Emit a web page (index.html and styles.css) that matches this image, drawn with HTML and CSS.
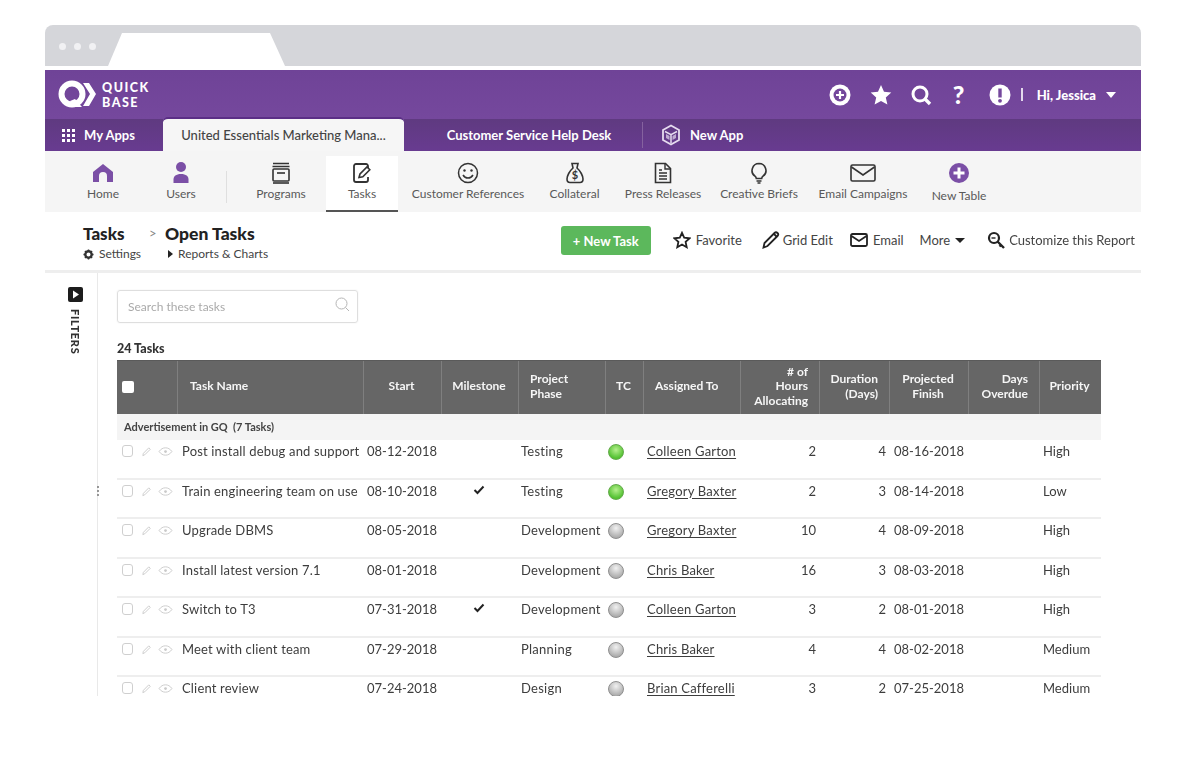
FILE: index.html
```html
<!DOCTYPE html>
<html lang="en">
<head>
<meta charset="utf-8">
<title>Quick Base – Open Tasks</title>
<link rel="stylesheet" href="styles.css">
</head>
<body>
<svg class="defs" width="0" height="0" aria-hidden="true">
  <symbol id="i-pencil" viewBox="0 0 12 12"><path d="M2 10.5 2.6 8 8.5 2l1.6 1.6-6 6Z" fill="none" stroke="currentColor" stroke-width="1"/></symbol>
  <symbol id="i-eye" viewBox="0 0 16 12"><path d="M1 6c2-2.8 4.2-4 7-4s5 1.200 7 4c-2 2.800-4.200 4-7 4S3 8.800 1 6Z" fill="none" stroke="currentColor" stroke-width="1"/><circle cx="8" cy="6" r="1.500" fill="currentColor"/></symbol>
  <symbol id="i-check" viewBox="0 0 12 10"><path d="M1.500 5 4.500 8 10.500 1.500" fill="none" stroke="currentColor" stroke-width="2"/></symbol>
</svg>
<div class="frame">
  <div class="chrome">
    <div class="dots"><i></i><i></i><i></i></div>
    <div class="chrome-tab"></div>
  </div>

  <header class="topbar">
    <div class="logo">
      <svg class="logo-mark" viewBox="0 0 38 30" width="38" height="30"><circle cx="14" cy="14" r="10.500" fill="none" stroke="#fff" stroke-width="6"/><path d="M17 19l7 8h-7l-5-6Z" fill="#fff"/><path d="M25 3h6l7 11-7 12h-6l7-12Z" fill="#fff"/></svg>
      <div class="logo-text"><span>QUICK</span><span>BASE</span></div>
    </div>
    <div class="top-actions">
      <svg class="ta ta-plus" viewBox="0 0 22 22" width="22" height="22"><circle cx="11" cy="11" r="10.500" fill="#fff"/><circle cx="11" cy="11" r="6.500" fill="#74479c"/><path d="M11 7v8M7 11h8" stroke="#fff" stroke-width="2.200"/></svg>
      <svg class="ta ta-star" viewBox="0 0 22 22" width="22" height="22"><path d="M11 1l3 6.800 7.300.7-5.500 4.900 1.600 7.200L11 16.900l-6.400 3.700 1.600-7.200L.7 8.500 8 7.800Z" fill="#fff"/></svg>
      <svg class="ta ta-search" viewBox="0 0 22 22" width="22" height="22"><circle cx="10" cy="10" r="7" fill="none" stroke="#fff" stroke-width="3"/><path d="M14.500 14.500 20 20" stroke="#fff" stroke-width="3.400"/></svg>
      <span class="ta ta-q">?</span>
      <svg class="ta ta-alert" viewBox="0 0 22 22" width="22" height="22"><circle cx="11" cy="11" r="10.500" fill="#fff"/><path d="M11 4.500v9" stroke="#74479c" stroke-width="3.400"/><circle cx="11" cy="16.800" r="1.900" fill="#74479c"/></svg>
      <span class="ta-sep"></span>
      <span class="ta-user">Hi, Jessica</span>
      <span class="caret caret-white"></span>
    </div>
  </header>

  <nav class="tabbar">
    <div class="apps-link">
      <svg viewBox="0 0 13 13" width="13" height="13"><g fill="#fff"><rect width="3" height="3"/><rect x="5" width="3" height="3"/><rect x="10" width="3" height="3"/><rect y="5" width="3" height="3"/><rect x="5" y="5" width="3" height="3"/><rect x="10" y="5" width="3" height="3"/><rect y="10" width="3" height="3"/><rect x="5" y="10" width="3" height="3"/><rect x="10" y="10" width="3" height="3"/></g></svg>
      <span>My Apps</span>
    </div>
    <div class="tab-active">United Essentials Marketing Mana...</div>
    <div class="tab-plain">Customer Service Help Desk</div>
    <div class="tab-new">
      <svg viewBox="0 0 20 22" width="20" height="22"><path d="M10 1.500 18 6v10l-8 4.500L2 16V6Z" fill="none" stroke="#e6dcef" stroke-width="1.800"/><path d="M4 7.500l6 3.200 6-3.200M10 10.700V19" fill="none" stroke="#e6dcef" stroke-width="1.500"/><path d="M5 10l3.500 2v4L5 14ZM15 10l-3.500 2v4l3.500-2Z" fill="#e6dcef" opacity=".7"/></svg>
      <span>New App</span>
    </div>
  </nav>

  <nav class="tablenav">
    <a class="nav-item">
      <svg class="nav-icon" viewBox="0 0 22 22" width="22" height="22"><path d="M11 2 21 10v10h-6v-6a4 4 0 0 0-8 0v6H1V10Z" fill="#7b4fa6"/></svg>
      <span>Home</span>
    </a>
    <a class="nav-item">
      <svg class="nav-icon" viewBox="0 0 22 24" width="22" height="24"><circle cx="11" cy="6" r="5" fill="#7b4fa6"/><path d="M3.500 22v-3.500c0-3.200 2.500-5.500 7.500-5.500s7.500 2.300 7.500 5.500V22Z" fill="#7b4fa6"/></svg>
      <span>Users</span>
    </a>
    <div class="nav-divider"></div>
    <a class="nav-item">
      <svg class="nav-icon" viewBox="0 0 20 22" width="20" height="22"><g fill="none" stroke="#333" stroke-width="1.600"><path d="M2 1.500h16M1.500 4.500h17"/><rect x="2" y="7" width="16" height="12" rx="1"/><path d="M6 11h8"/><path d="M2 21h16"/></g></svg>
      <span>Programs</span>
    </a>
    <a class="nav-item nav-active">
      <svg class="nav-icon" viewBox="0 0 22 22" width="22" height="22"><path d="M17 6V4a2 2 0 0 0-2-2H5a2 2 0 0 0-2 2v14a2 2 0 0 0 2 2h10a2 2 0 0 0 2-2v-3" fill="none" stroke="#333" stroke-width="1.800"/><path d="M8 15.500 9 12l7-7 2.800 2.800-7 7Z" fill="#fff" stroke="#333" stroke-width="1.600"/></svg>
      <span>Tasks</span>
    </a>
    <a class="nav-item">
      <svg class="nav-icon" viewBox="0 0 22 22" width="22" height="22"><circle cx="11" cy="11" r="9.500" fill="none" stroke="#333" stroke-width="1.500"/><circle cx="7.500" cy="8.500" r="1.200" fill="#333"/><circle cx="14.500" cy="8.500" r="1.200" fill="#333"/><path d="M6 13c1.200 2 3 3 5 3s3.800-1 5-3" fill="none" stroke="#333" stroke-width="1.500"/></svg>
      <span>Customer References</span>
    </a>
    <a class="nav-item">
      <svg class="nav-icon" viewBox="0 0 20 22" width="20" height="22"><path d="M7 1.500h6L12 6c3.500 3 6 8 6 11 0 2.500-1.500 3.500-3 3.500H5c-1.500 0-3-1-3-3.500 0-3 2.500-8 6-11Z" fill="none" stroke="#333" stroke-width="1.600"/><text x="10" y="17" class="svg-dollar">$</text></svg>
      <span>Collateral</span>
    </a>
    <a class="nav-item">
      <svg class="nav-icon" viewBox="0 0 18 22" width="18" height="22"><path d="M1.500 1.500h10l5 5v14h-15Z" fill="none" stroke="#333" stroke-width="1.600"/><path d="M11 1.500v5.500h5.500M5 11h8M5 14h8M5 17h8M5 8h3" fill="none" stroke="#333" stroke-width="1.400"/></svg>
      <span>Press Releases</span>
    </a>
    <a class="nav-item">
      <svg class="nav-icon" viewBox="0 0 18 22" width="18" height="22"><path d="M9 1.500a7 7 0 0 0-4 12.700c.8.700 1.200 1.500 1.300 2.300h5.400c.1-.8.500-1.600 1.300-2.300A7 7 0 0 0 9 1.500Z" fill="none" stroke="#333" stroke-width="1.600"/><path d="M6.500 19h5M7.500 21h3" stroke="#333" stroke-width="1.600"/></svg>
      <span>Creative Briefs</span>
    </a>
    <a class="nav-item">
      <svg class="nav-icon" viewBox="0 0 26 18" width="26" height="18"><rect x="1" y="1" width="24" height="16" rx="1.500" fill="none" stroke="#333" stroke-width="1.600"/><path d="M1.500 3 13 11 24.500 3" fill="none" stroke="#333" stroke-width="1.600"/></svg>
      <span>Email Campaigns</span>
    </a>
    <a class="nav-item nav-new">
      <svg class="nav-icon" viewBox="0 0 20 20" width="20" height="20"><circle cx="10" cy="10" r="10" fill="#7b4fa6"/><path d="M10 4.500v11M4.500 10h11" stroke="#fff" stroke-width="3"/></svg>
      <span>New Table</span>
    </a>
  </nav>

  <section class="titlebar">
    <div class="crumbs">
      <div class="crumb">
        <div class="crumb-title">Tasks</div>
        <div class="crumb-sub">
          <svg viewBox="0 0 12 12" width="11" height="11"><circle cx="6" cy="6" r="3.500" fill="none" stroke="#333" stroke-width="2.600"/><path d="M6 .5v2M6 9.500v2M.5 6h2M9.500 6h2M2.100 2.100l1.400 1.400M8.500 8.500l1.400 1.400M2.100 9.900l1.400-1.400M8.500 3.500l1.400-1.400" stroke="#333" stroke-width="1.600"/></svg>
          <span>Settings</span>
        </div>
      </div>
      <div class="crumb-arrow">&gt;</div>
      <div class="crumb">
        <div class="crumb-title crumb-large">Open Tasks</div>
        <div class="crumb-sub crumb-sub-reports">
          <span class="tri"></span>
          <span>Reports &amp; Charts</span>
        </div>
      </div>
    </div>
    <div class="report-actions">
      <button class="btn-new">+ New Task</button>
      <a class="ra ra-fav">
        <svg viewBox="0 0 18 18" width="18" height="18"><path d="M9 1.800l2.200 4.900 5.300.6-3.900 3.600 1.100 5.300L9 13.500l-4.700 2.700 1.100-5.300-3.900-3.600 5.300-.6Z" fill="none" stroke="#222" stroke-width="1.800"/></svg>
        <span>Favorite</span>
      </a>
      <a class="ra ra-grid">
        <svg viewBox="0 0 18 18" width="18" height="18"><path d="M1.500 16.500 2.500 12 12.500 2a2 2 0 0 1 3 3l-10 10Z" fill="none" stroke="#222" stroke-width="1.800"/><path d="M12 3l3 3" stroke="#222" stroke-width="1.800"/></svg>
        <span>Grid Edit</span>
      </a>
      <a class="ra ra-email">
        <svg viewBox="0 0 18 14" width="18" height="14"><rect x="1" y="1" width="16" height="12" rx="1.500" fill="none" stroke="#222" stroke-width="1.800"/><path d="M1.500 3 9 8l7.500-5" fill="none" stroke="#222" stroke-width="1.800"/></svg>
        <span>Email</span>
      </a>
      <a class="ra ra-more"><span>More</span><span class="caret caret-dark"></span></a>
      <a class="ra ra-custom">
        <svg viewBox="0 0 19 19" width="19" height="19"><circle cx="7" cy="7" r="5" fill="none" stroke="#222" stroke-width="2.200"/><path d="M4.500 7h4" stroke="#222" stroke-width="1.400"/><path d="M10.500 10.500 17 17M14 14l-1.500 1.500" stroke="#222" stroke-width="2.400"/></svg>
        <span>Customize this Report</span>
      </a>
    </div>
  </section>

  <main class="workspace">
    <aside class="filters">
      <span class="filters-btn"><svg viewBox="0 0 15 15" width="15" height="15"><rect width="15" height="15" rx="2" fill="#1d1d1d"/><path d="M5 3.500 11 7.500 5 11.500Z" fill="#fff"/></svg></span>
      <span class="filters-label">FILTERS</span>
      <span class="handle"><i></i><i></i><i></i></span>
    </aside>
    <div class="report">
      <div class="searchbox">
        <span>Search these tasks</span>
        <svg viewBox="0 0 15 15" width="15" height="15"><circle cx="6.500" cy="6.500" r="5.500" fill="none" stroke="#b5b5b5" stroke-width="1"/><path d="M10.500 10.500 14 14" stroke="#b5b5b5" stroke-width="1"/></svg>
      </div>
      <div class="count">24 Tasks</div>
      <div class="grid-table">
        <div class="row head">
          <div class="hc hc-check"><span class="hbox"></span></div>
          <div class="hc hc-name">Task Name</div>
          <div class="hc center">Start</div>
          <div class="hc center">Milestone</div>
          <div class="hc hc-left">Project<br>Phase</div>
          <div class="hc center">TC</div>
          <div class="hc hc-left">Assigned To</div>
          <div class="hc right">#&nbsp;of<br>Hours<br>Allocating</div>
          <div class="hc right">Duration<br>(Days)</div>
          <div class="hc center">Projected<br>Finish</div>
          <div class="hc right">Days<br>Overdue</div>
          <div class="hc center">Priority</div>
        </div>
        <div class="group">Advertisement in GQ&nbsp; (7 Tasks)</div>

        <div class="row item">
          <div class="c c-tools"><span class="cb"></span><svg class="ic-p"><use href="#i-pencil"/></svg><svg class="ic-e"><use href="#i-eye"/></svg></div>
          <div class="c c-name">Post install debug and support</div>
          <div class="c c-date">08-12-2018</div>
          <div class="c c-ms"></div>
          <div class="c c-phase">Testing</div>
          <div class="c c-tc"><span class="dot green"></span></div>
          <div class="c c-who"><a>Colleen Garton</a></div>
          <div class="c c-num">2</div>
          <div class="c c-num">4</div>
          <div class="c c-date2">08-16-2018</div>
          <div class="c"></div>
          <div class="c c-pri">High</div>
        </div>
        <div class="row item">
          <div class="c c-tools"><span class="cb"></span><svg class="ic-p"><use href="#i-pencil"/></svg><svg class="ic-e"><use href="#i-eye"/></svg></div>
          <div class="c c-name">Train engineering team on use</div>
          <div class="c c-date">08-10-2018</div>
          <div class="c c-ms"><svg class="ic-c"><use href="#i-check"/></svg></div>
          <div class="c c-phase">Testing</div>
          <div class="c c-tc"><span class="dot green"></span></div>
          <div class="c c-who"><a>Gregory Baxter</a></div>
          <div class="c c-num">2</div>
          <div class="c c-num">3</div>
          <div class="c c-date2">08-14-2018</div>
          <div class="c"></div>
          <div class="c c-pri">Low</div>
        </div>
        <div class="row item">
          <div class="c c-tools"><span class="cb"></span><svg class="ic-p"><use href="#i-pencil"/></svg><svg class="ic-e"><use href="#i-eye"/></svg></div>
          <div class="c c-name">Upgrade DBMS</div>
          <div class="c c-date">08-05-2018</div>
          <div class="c c-ms"></div>
          <div class="c c-phase">Development</div>
          <div class="c c-tc"><span class="dot gray"></span></div>
          <div class="c c-who"><a>Gregory Baxter</a></div>
          <div class="c c-num">10</div>
          <div class="c c-num">4</div>
          <div class="c c-date2">08-09-2018</div>
          <div class="c"></div>
          <div class="c c-pri">High</div>
        </div>
        <div class="row item">
          <div class="c c-tools"><span class="cb"></span><svg class="ic-p"><use href="#i-pencil"/></svg><svg class="ic-e"><use href="#i-eye"/></svg></div>
          <div class="c c-name">Install latest version 7.1</div>
          <div class="c c-date">08-01-2018</div>
          <div class="c c-ms"></div>
          <div class="c c-phase">Development</div>
          <div class="c c-tc"><span class="dot gray"></span></div>
          <div class="c c-who"><a>Chris Baker</a></div>
          <div class="c c-num">16</div>
          <div class="c c-num">3</div>
          <div class="c c-date2">08-03-2018</div>
          <div class="c"></div>
          <div class="c c-pri">High</div>
        </div>
        <div class="row item">
          <div class="c c-tools"><span class="cb"></span><svg class="ic-p"><use href="#i-pencil"/></svg><svg class="ic-e"><use href="#i-eye"/></svg></div>
          <div class="c c-name">Switch to T3</div>
          <div class="c c-date">07-31-2018</div>
          <div class="c c-ms"><svg class="ic-c"><use href="#i-check"/></svg></div>
          <div class="c c-phase">Development</div>
          <div class="c c-tc"><span class="dot gray"></span></div>
          <div class="c c-who"><a>Colleen Garton</a></div>
          <div class="c c-num">3</div>
          <div class="c c-num">2</div>
          <div class="c c-date2">08-01-2018</div>
          <div class="c"></div>
          <div class="c c-pri">High</div>
        </div>
        <div class="row item">
          <div class="c c-tools"><span class="cb"></span><svg class="ic-p"><use href="#i-pencil"/></svg><svg class="ic-e"><use href="#i-eye"/></svg></div>
          <div class="c c-name">Meet with client team</div>
          <div class="c c-date">07-29-2018</div>
          <div class="c c-ms"></div>
          <div class="c c-phase">Planning</div>
          <div class="c c-tc"><span class="dot gray"></span></div>
          <div class="c c-who"><a>Chris Baker</a></div>
          <div class="c c-num">4</div>
          <div class="c c-num">4</div>
          <div class="c c-date2">08-02-2018</div>
          <div class="c"></div>
          <div class="c c-pri">Medium</div>
        </div>
        <div class="row item">
          <div class="c c-tools"><span class="cb"></span><svg class="ic-p"><use href="#i-pencil"/></svg><svg class="ic-e"><use href="#i-eye"/></svg></div>
          <div class="c c-name">Client review</div>
          <div class="c c-date">07-24-2018</div>
          <div class="c c-ms"></div>
          <div class="c c-phase">Design</div>
          <div class="c c-tc"><span class="dot gray"></span></div>
          <div class="c c-who"><a>Brian Cafferelli</a></div>
          <div class="c c-num">3</div>
          <div class="c c-num">2</div>
          <div class="c c-date2">07-25-2018</div>
          <div class="c"></div>
          <div class="c c-pri">Medium</div>
        </div>
      </div>
    </div>
  </main>
</div>
</body>
</html>
```
FILE: styles.css
```css
* { box-sizing: border-box; }
html, body { margin: 0; height: 100%; background: #fff; }
body {
  padding: 25px 59px 0 45px;
  font-family: Lato, "Open Sans", sans-serif;
  color: #444;
  overflow: hidden;
}
a { color: inherit; text-decoration: none; }
.defs { position: absolute; }

.frame {
  width: 1096px;
  height: 671px;
  overflow: hidden;
  filter: blur(.45px);
}

/* browser chrome */
.chrome {
  height: 41px;
  margin-bottom: 4px;
  background: #d5d6da;
  border-radius: 8px 8px 0 0;
  display: flex;
  align-items: flex-end;
}
.dots { display: flex; gap: 8px; padding: 0 0 16px 14px; width: 63px; }
.dots i { width: 7px; height: 7px; border-radius: 50%; background: #f1f1f3; }
.chrome-tab {
  width: 177px;
  height: 33px;
  background: #fff;
  clip-path: polygon(0 100%, 14px 0, 162px 0, 100% 100%);
}

/* purple header */
.topbar {
  height: 49px;
  background: linear-gradient(#6f4397, #75489d);
  display: flex;
  justify-content: space-between;
  align-items: center;
  color: #fff;
}
.logo { display: flex; align-items: flex-start; padding: 9px 0 0 13px; height: 49px; }
.logo-mark { display: block; margin-top: 1px; }
.logo-text {
  display: flex;
  flex-direction: column;
  margin-left: 6px;
  padding-top: 1px;
  font-weight: 900;
  font-size: 12.500px;
  line-height: 15px;
  letter-spacing: 1.500px;
}
.top-actions { display: flex; align-items: center; padding-right: 25px; height: 49px; }
.ta { display: block; flex: none; }
.ta-plus { margin-right: 19px; }
.ta-star { margin-right: 18px; }
.ta-search { margin-right: 17px; }
.ta-q { width: 20px; font-size: 25px; font-weight: 900; line-height: 25px; text-align: center; margin-right: 20px; }
.ta-alert { margin-right: 10px; }
.ta-sep { width: 2px; height: 13px; background: #e3d9ec; margin-right: 14px; }
.ta-user { font-size: 13px; font-weight: 900; margin-right: 10px; }
.caret { display: inline-block; width: 0; height: 0; border-style: solid; border-color: transparent; border-bottom-width: 0; }
.caret-white { border-width: 6px 5.500px 0; border-top-color: #fff; }
.caret-dark { border-width: 5px 5px 0; border-top-color: #222; }

/* app tabs */
.tabbar {
  height: 32px;
  background: linear-gradient(#5f3a80, #683b90);
  display: flex;
  align-items: stretch;
  color: #fff;
  font-size: 13px;
  font-weight: 700;
}
.apps-link { width: 118px; display: flex; align-items: center; gap: 9px; padding-left: 17px; }
.tab-active {
  width: 241px;
  height: 34px;
  margin-top: -2px;
  background: #f6f6f6;
  border-top: 2px solid #5b2f86;
  border-radius: 5px 5px 0 0;
  color: #444;
  font-weight: 500;
  display: flex;
  align-items: center;
  justify-content: center;
  position: relative;
}
.tab-plain {
  width: 239px;
  height: 26px;
  margin-top: 3px;
  padding-left: 12px;
  display: flex;
  align-items: center;
  justify-content: center;
  border-right: 1px solid #85629f;
}
.tab-new { display: flex; align-items: center; gap: 9px; padding: 0 0 0 18px; }

/* table nav */
.tablenav {
  height: 61px;
  background: #f5f5f5;
  display: grid;
  grid-template-columns: 76px 80px 15px 90px 72px 140px 73px 104px 88px 120px 72px;
  padding-left: 20px;
  font-size: 12px;
  color: #595959;
}
.nav-item { display: flex; flex-direction: column; align-items: center; height: 61px; position: relative; }
.nav-icon { display: block; height: 24px; margin-top: 10px; margin-bottom: 1px; flex: none; }
.nav-item span { line-height: 16px; white-space: nowrap; }
.nav-active { background: linear-gradient(#f5f5f5 5px, #fff 5px); border-bottom: 2px solid #555; }
.nav-new span { margin-top: 2px; }
.nav-divider { width: 1px; height: 32px; margin: 20px 0 0 5px; background: #dfdfdf; }
.svg-dollar { font: 700 11px Lato, sans-serif; text-anchor: middle; fill: #333; }

/* report title */
.titlebar {
  height: 61px;
  padding-bottom: 2px;
  display: flex;
  justify-content: space-between;
  border-bottom: 3px solid #eeeeee;
  background: #fff;
}
.crumbs { display: flex; padding: 12px 0 0 38px; }
.crumb-title { font-size: 17px; font-weight: 900; color: #222; line-height: 20px; height: 20px; }
.crumb-large { font-size: 17.500px; }
.crumb-sub { display: flex; align-items: center; gap: 5px; font-size: 12px; color: #444; line-height: 20px; }
.crumb-arrow { width: 22px; padding-left: 6px; padding-top: 1px; font-size: 13px; color: #888; flex: none; }
.crumb:first-child { width: 60px; flex: none; white-space: nowrap; }
.crumb-sub-reports { padding-left: 3px; }
.tri { width: 0; height: 0; border: 4px solid transparent; border-left: 5px solid #222; border-right-width: 0; }
.report-actions { display: flex; align-items: center; height: 56px; padding: 0 6px 0 0; font-size: 13px; color: #444; }
.btn-new {
  width: 90px;
  height: 29px;
  margin: 1px 22px 0 0;
  background: #5cb85c;
  border: 0;
  border-radius: 3px;
  color: #fff;
  font: 700 13px Lato, sans-serif;
}
.ra { display: flex; align-items: center; gap: 5px; white-space: nowrap; }
.ra-fav { margin-right: 20px; }
.ra-grid { gap: 3px; margin-right: 17px; }
.ra-email { margin-right: 16px; }
.ra-more { margin-right: 22px; }
.ra-custom { gap: 3px; }

/* body */
.workspace { display: flex; height: 424px; }
.filters {
  width: 53px;
  flex: none;
  border-right: 1px solid #e9e9e9;
  padding: 14px 0 0 23px;
  display: flex;
  flex-direction: column;
  align-items: flex-start;
  position: relative;
}
.filters-btn { display: block; height: 15px; }
.filters-btn svg { display: block; }
.filters-label {
  writing-mode: vertical-rl;
  margin: 7px 0 0 1px;
  font-size: 11px;
  line-height: 13px;
  font-weight: 900;
  letter-spacing: .7px;
  color: #333;
}
.handle {
  position: absolute;
  right: -2px;
  top: 213px;
  display: flex;
  flex-direction: column;
  gap: 2px;
}
.handle i { width: 2px; height: 2px; border-radius: 50%; background: #777; }
.report { padding: 17px 0 0 19px; flex: 1; min-width: 0; }
.searchbox {
  width: 241px;
  height: 33px;
  border: 1px solid #dedede;
  border-radius: 3px;
  box-shadow: 0 0 2px #eee;
  padding: 0 7px 0 10px;
  display: flex;
  align-items: center;
  justify-content: space-between;
  font-size: 12px;
  color: #aaa;
}
.searchbox svg { margin-top: -4px; }
.count { margin-top: 18px; height: 19px; font-size: 12.500px; line-height: 16px; font-weight: 900; color: #333; }

.grid-table { width: 984px; }
.row {
  display: grid;
  grid-template-columns: 60px 186px 78px 77px 87px 38px 97px 79px 70px 79px 71px 62px;
}
.head {
  height: 54px;
  padding-bottom: 2px;
  background: #666;
  color: #f6f6f6;
  font-size: 12px;
  font-weight: 700;
  line-height: 14.500px;
  border-top: 1px solid #5a5a5a;
}
.hc { display: flex; flex-direction: column; justify-content: center; border-left: 1px solid #7f7f7f; margin-bottom: -2px; }
.hc:first-child { border-left: 0; }
.hc-check { padding-left: 5px; }
.hbox { width: 12px; height: 12px; background: #fff; border-radius: 2px; }
.hc-name { padding-left: 12px; }
.hc-left { padding-left: 11px; padding-bottom: 2px; }
.center { text-align: center; padding-right: 2px; padding-bottom: 2px; }
.right { text-align: right; padding-right: 11px; padding-bottom: 2px; }
.hc-check, .hc-name { padding-bottom: 2px; }
.group {
  height: 26px;
  background: #f4f4f4;
  padding-left: 7px;
  font-size: 11px;
  line-height: 25px;
  font-weight: 700;
  color: #444;
}
.item {
  height: 39.500px;
  border-bottom: 2px solid #eee;
  font-size: 13px;
  line-height: 16px;
  color: #3d3d3d;
  white-space: nowrap;
}
.c { padding-top: 3px; min-width: 0; }
.c-tools { display: flex; align-items: flex-start; padding: 5px 0 0 5px; color: #c9c9c9; }
.cb { width: 11px; height: 12px; border: 1.500px solid #cfcfcf; border-radius: 3px; flex: none; }
.ic-p { width: 11px; height: 11px; margin: 1px 0 0 8px; flex: none; }
.ic-e { width: 15px; height: 11px; margin: 1px 0 0 6px; flex: none; }
.c-name { padding-left: 5px; letter-spacing: .17px; }
.c-date { padding-left: 4px; }
.c-ms { text-align: center; padding: 5px 2px 0 0; color: #222; }
.ic-c { width: 12px; height: 10px; display: inline-block; vertical-align: top; }
.c-phase { padding-left: 3px; letter-spacing: .25px; }
.c-tc { padding: 4px 0 0 3px; }
.dot { display: block; width: 16px; height: 16px; border-radius: 50%; }
.green { background: radial-gradient(circle at 50% 35%, #b6f08e, #55c233 70%); border: 1px solid #63a94a; }
.gray { background: radial-gradient(circle at 50% 30%, #f1f1f1, #adadad 75%); border: 1px solid #8e8e8e; }
.c-who { padding-left: 4px; letter-spacing: .2px; }
.c-who a { text-decoration: underline; text-underline-offset: 2px; }
.c-num { text-align: right; padding-right: 3px; }
.c-date2 { padding-left: 5px; }
.c-pri { padding-left: 4px; }
```
